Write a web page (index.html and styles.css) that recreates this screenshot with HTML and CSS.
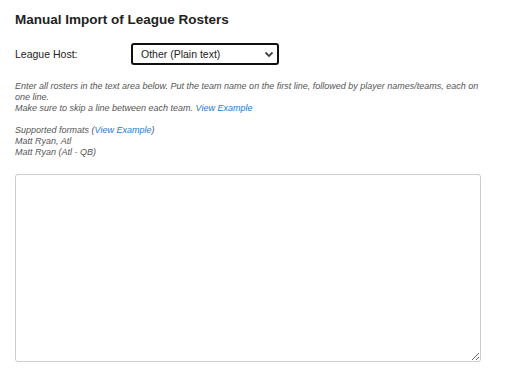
FILE: index.html
```html
<!DOCTYPE html>
<html>
<head>
<meta charset="utf-8">
<link rel="stylesheet" href="styles.css">
</head>
<body>
<div class="page">
  <h1 class="title">Manual Import of League Rosters</h1>
  <div class="host-row">
    <label class="host-label">League Host:</label>
    <div class="select">
      <span class="select-text">Other (Plain text)</span>
      <svg class="chev" width="10" height="7" viewBox="0 0 10 7"><path d="M1.5 1.5 L5 5 L8.5 1.5" fill="none" stroke="#444" stroke-width="1.8"/></svg>
    </div>
  </div>
  <p class="note">Enter all rosters in the text area below. Put the team name on the first line, followed by player names/teams, each on one line.<br>Make sure to skip a line between each team. <a class="link" href="#">View Example</a></p>
  <p class="note formats">Supported formats (<a class="link" href="#">View Example</a>)<br>Matt Ryan, Atl<br>Matt Ryan (Atl - QB)</p>
  <textarea class="roster"></textarea>
</div>
</body>
</html>
```

FILE: styles.css
```css
html, body { margin: 0; padding: 0; background: #fff; }
body { font-family: "Liberation Sans", Arial, sans-serif; color: #222; }
.page { padding: 10px 15px 0 15px; }
.title { font-size: 13.5px; font-weight: bold; margin: 0; line-height: 20px; color: #222; }
.host-row { display: flex; align-items: center; margin-top: 13px; height: 22px; }
.host-label { font-size: 10.5px; width: 116px; color: #222; }
.select { box-sizing: border-box; width: 148px; height: 22px; border: 2px solid #111; border-radius: 3px; display: flex; align-items: center; justify-content: space-between; padding: 0 3px 0 8px; }
.select-text { font-size: 10.5px; color: #222; }
.chev { display: block; }
.note { font-size: 9px; font-style: italic; color: #555; line-height: 11px; margin: 16px 0 0 0; max-width: 466px; }
.formats { margin-top: 11px; }
.link { color: #1a7ad4; text-decoration: none; }
.roster { display: block; box-sizing: border-box; width: 466px; height: 188px; margin-top: 16px; border: 1px solid #ccc; border-radius: 3px; resize: both; }
```
